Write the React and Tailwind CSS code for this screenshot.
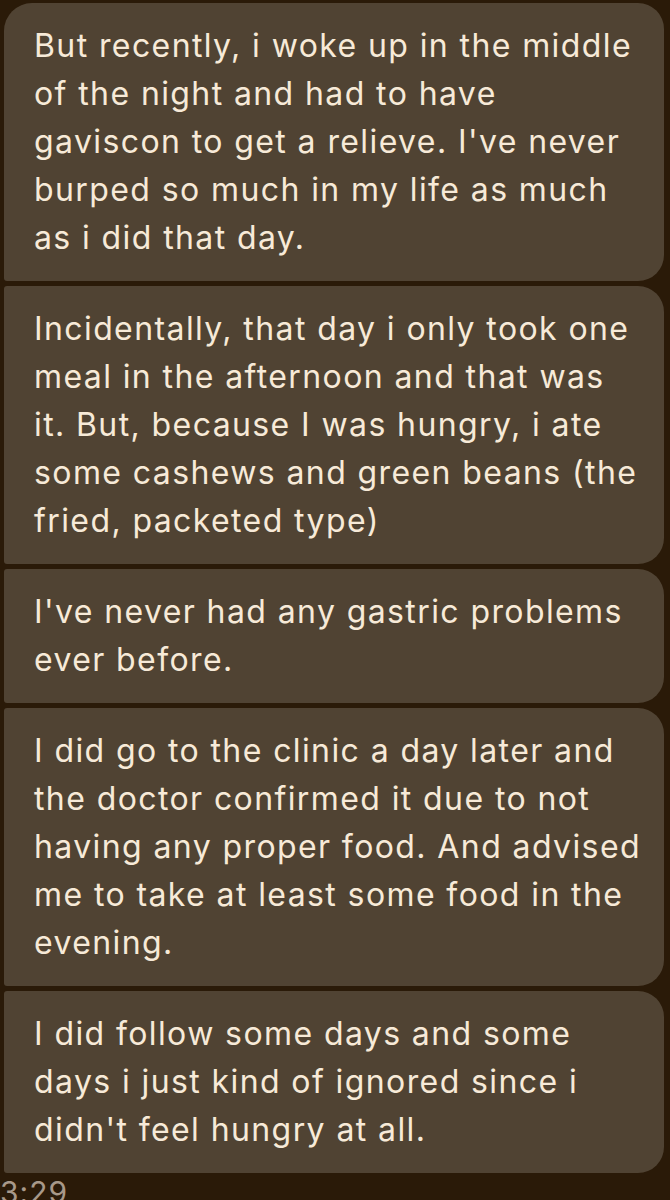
import React from "react";

const messages = [
  [
    "But recently, i woke up in the middle",
    "of the night and had to have",
    "gaviscon to get a relieve. I've never",
    "burped so much in my life as much",
    "as i did that day.",
  ],
  [
    "Incidentally, that day i only took one",
    "meal in the afternoon and that was",
    "it. But, because I was hungry, i ate",
    "some cashews and green beans (the",
    "fried, packeted type)",
  ],
  ["I've never had any gastric problems", "ever before."],
  [
    "I did go to the clinic a day later and",
    "the doctor confirmed it due to not",
    "having any proper food. And advised",
    "me to take at least some food in the",
    "evening.",
  ],
  [
    "I did follow some days and some",
    "days i just kind of ignored since i",
    "didn't feel hungry at all.",
  ],
];

export default function App() {
  return (
    <div className="min-h-[1200px] w-[670px] overflow-hidden bg-[#2a1a08] pt-[3px] font-['Inter',sans-serif]">
      <div className="flex flex-col gap-[5px] pl-[4px] pr-[6px]">
        {messages.map((lines, i) => (
          <div
            key={i}
            className={
              "rounded-r-[26px] bg-[#504333] py-[19px] pl-[30px] pr-4 text-[32px] leading-[48px] tracking-[1.4px] text-[#f7ead8] " +
              (i === 0 ? "rounded-tl-[28px] rounded-bl-[3px]" : "rounded-l-[3px]")
            }
          >
            {lines.map((line, j) => (
              <div key={j} className="whitespace-nowrap">
                {line}
              </div>
            ))}
          </div>
        ))}
      </div>
      <div className="mt-[3px] text-[30px] leading-[32px] tracking-[1px] text-[#a8998a]">3:29</div>
    </div>
  );
}
